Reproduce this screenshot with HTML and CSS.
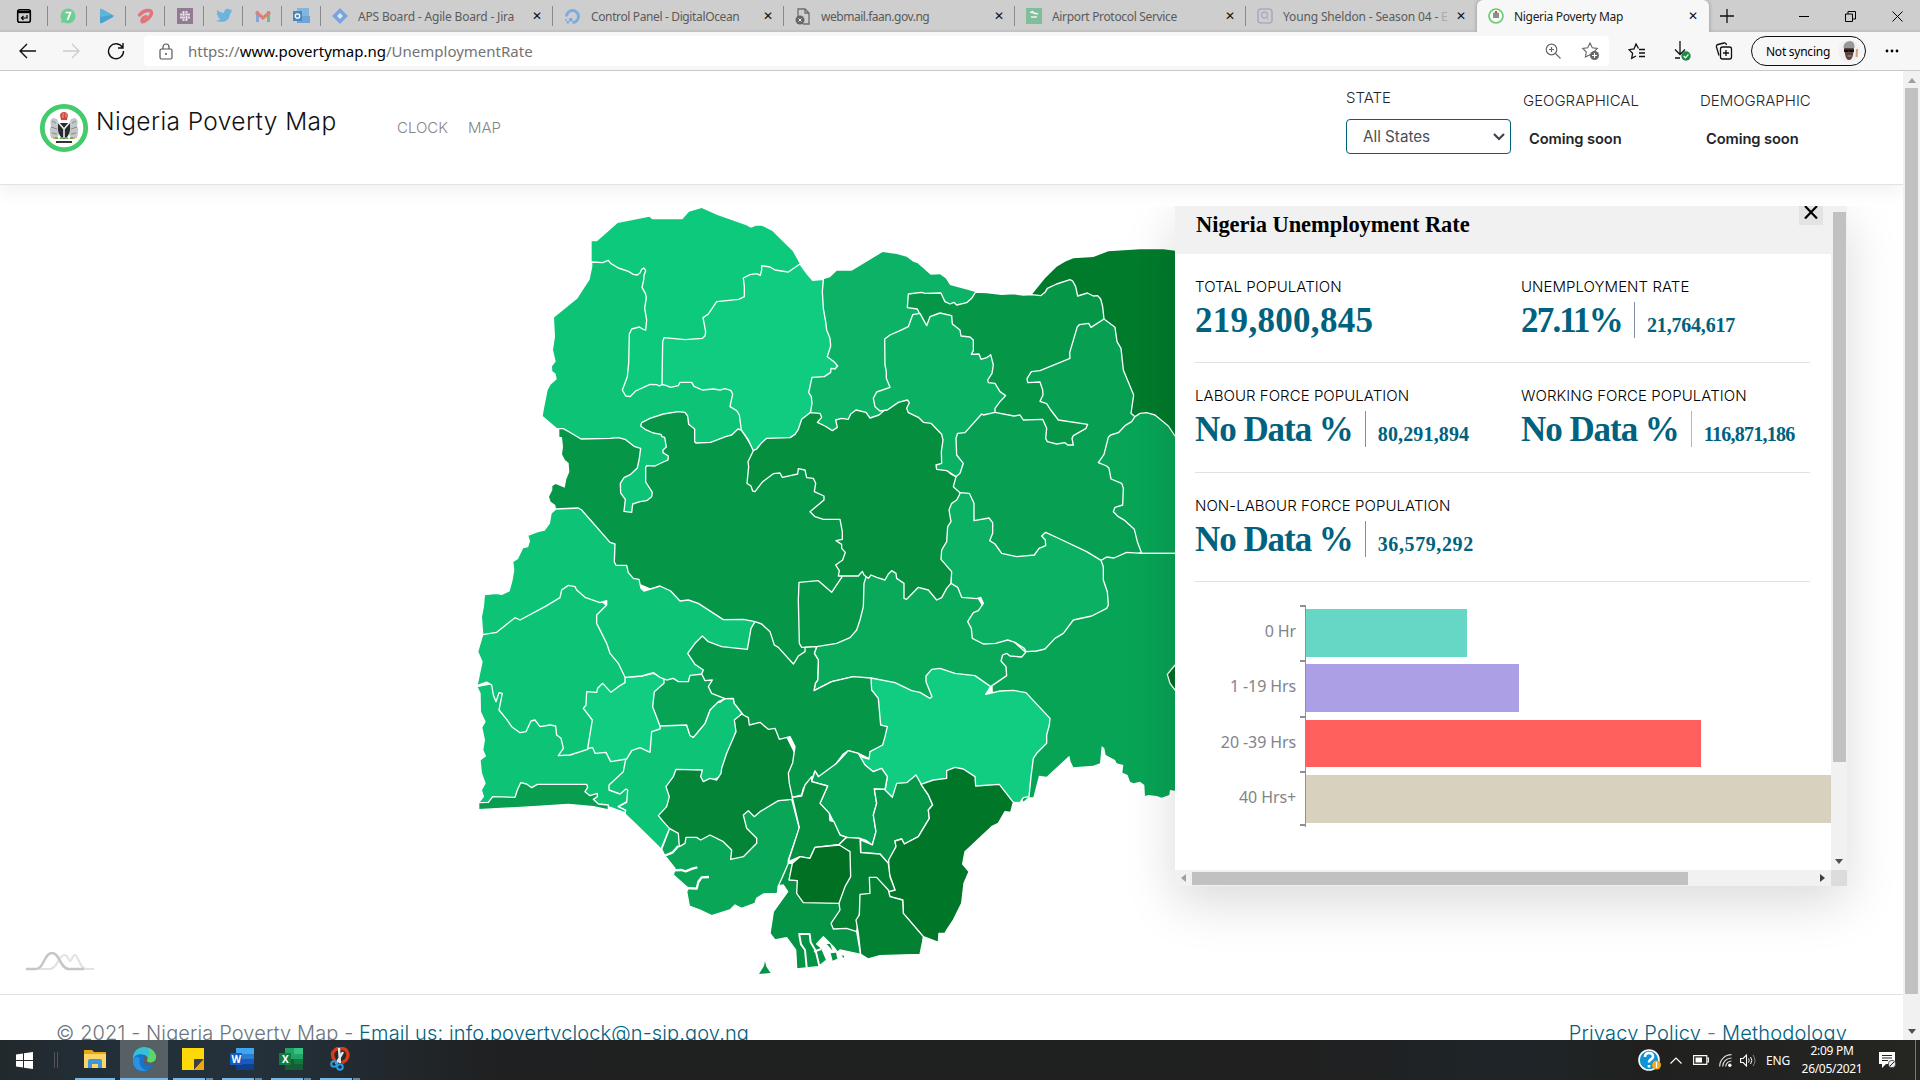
FILE: index.html
```html
<!DOCTYPE html>
<html lang="en">
<head>
<meta charset="utf-8">
<title>Nigeria Poverty Map</title>
<link rel="stylesheet" href="styles.css">
</head>
<body>
<div class="tabs">
  <div class="pin first"><svg width="16" height="16" viewBox="0 0 16 16"><rect x="1.7" y="1.7" width="12.6" height="12.6" rx="2" fill="none" stroke="#000" stroke-width="1.6"/><path d="M1 4h14" stroke="#000" stroke-width="2.4"/><path d="M11 7v3H5.5M7.5 8l-2 2 2 2" fill="none" stroke="#000" stroke-width="1.2"/></svg></div>
  <div class="pin"><svg width="16" height="16" viewBox="0 0 16 16"><circle cx="8" cy="8" r="7.5" fill="#6fce93"/><path d="M1 15l1-5 4 4z" fill="#6fce93"/><path d="M5.5 4.5h5L7.500 12" fill="none" stroke="#fff" stroke-width="1.7"/></svg></div>
  <div class="pin"><svg width="16" height="16" viewBox="0 0 16 16"><path d="M1 2q0-2 2-1l11 6q2 1 0 2L3 15q-2 1-2-1z" fill="#5fb4dc"/><path d="M1 9l12-2 1 2L3 15q-2 1-2-1z" fill="#4aa3cf"/></svg></div>
  <div class="pin"><svg width="17" height="17" viewBox="0 0 17 17"><path d="M2.500 7Q6 3 10 2.500q5-.5 4.500 3-1 4-7.500 8" fill="none" stroke="#e2757a" stroke-width="3.400" stroke-linecap="round"/><path d="M5 14q-1-4 4-5.500" fill="none" stroke="#e2757a" stroke-width="3" stroke-linecap="round"/></svg></div>
  <div class="pin"><svg width="16" height="16" viewBox="0 0 16 16"><path fill="#937a94" d="M0 0h16v16H0z"/><path d="M6.500 3v5M9.500 8v5M3 9.500h5M8 6.500h5M9.500 3v2M6.500 11v2M3 6.500h2M11 9.500h2" stroke="#e6e0e6" stroke-width="2"/></svg></div>
  <div class="pin"><svg width="16" height="16" viewBox="0 0 16 16"><path d="M1 2q3 3 7 3c0-5 5-5 6-3l2-.5-1 2 1 .2-2 2C14 13 6 16 0 12.500q3 0 4.500-1.500-2-.5-3-2.500H3Q.5 7.500.6 5l1.400.4Q0 4 1 2z" fill="#6db4dc"/></svg></div>
  <div class="pin"><svg width="16" height="14" viewBox="0 0 16 14"><path d="M1 13V2h3v11z" fill="#85a7dc"/><path d="M12 13V2h3v11z" fill="#76bb86"/><path d="M1 3l7 6 7-6" fill="none" stroke="#e07d74" stroke-width="3"/></svg></div>
  <div class="pin"><svg width="17" height="16" viewBox="0 0 17 16"><path fill="#83b6df" d="M4 0h12v8H4z"/><path fill="#6fa5d4" d="M4 8h13v7H4z"/><path fill="#4d86b8" d="M0 3h9v10H0z"/><circle cx="4.500" cy="8" r="2.200" fill="none" stroke="#fff" stroke-width="1.300"/></svg></div>
  <div class="tab"><svg width="16" height="16" viewBox="0 0 16 16"><path d="M8 0l8 8-8 8-8-8z" fill="#7ba3e0"/><path d="M8 5l3 3-3 3-3-3z" fill="#dfe6f2"/></svg><span class="t1">APS Board - Agile Board - Jira</span><b>✕</b></div>
  <div class="tab"><svg width="17" height="17" viewBox="0 0 17 17"><path d="M8.500 14.500a6 6 0 1 0-6-6" fill="none" stroke="#78aee4" stroke-width="3"/><path fill="#78aee4" d="M5 10h3.500v3.500H5zM2.500 13H5v2.500H2.500zM1 11h1.700v1.700H1z"/></svg><span class="t2">Control Panel - DigitalOcean</span><b>✕</b></div>
  <div class="tab"><svg width="16" height="17" viewBox="0 0 16 17"><path d="M3 9V1h7l4 4v11H8M10 1v4h4" fill="none" stroke="#6d6d6d" stroke-width="1.300"/><circle cx="5" cy="12" r="4.500" fill="#666"/><path d="M3.500 10.500l3 3m0-3l-3 3" stroke="#eee"/></svg><span class="t3">webmail.faan.gov.ng</span><b>✕</b></div>
  <div class="tab"><svg width="16" height="16" viewBox="0 0 16 16"><path fill="#80bd9b" d="M0 0h16v16H0z"/><path d="M4 4l8 2M6 3l3 3M5 9h6" stroke="#eef6f1" stroke-width="1.400"/></svg><span class="t4">Airport Protocol Service</span><b>✕</b></div>
  <div class="tab last"><svg width="16" height="16" viewBox="0 0 16 16"><rect x="1" y="1" width="14" height="14" rx="3" fill="none" stroke="#aaaac4" stroke-width="1.600"/><circle cx="7.500" cy="7" r="3" fill="none" stroke="#aaaac4" stroke-width="1.400"/><path d="M10 11h2" stroke="#aaaac4"/></svg><span class="t5">Young Sheldon - Season 04 - <i>E</i></span><b>✕</b></div>
  <div class="tab active"><svg width="16" height="16" viewBox="0 0 16 16"><circle cx="8" cy="8" r="7" fill="#f6fbf4" stroke="#6ccb78" stroke-width="1.700"/><path d="M5 5l3-1 3 1v5H5z" fill="#8a9189"/><path d="M7 3h2v2H7z" fill="#c7544c"/></svg><span>Nigeria Poverty Map</span><b>✕</b></div>
  <svg class="plus" width="14" height="14" viewBox="0 0 14 14"><path d="M7 0v14M0 7h14" stroke="#111" stroke-width="1.300"/></svg>
  <div class="wins">
    <svg width="10" height="10" viewBox="0 0 10 10"><path d="M0 5.500h10" stroke="#000"/></svg>
    <svg width="11" height="11" viewBox="0 0 11 11"><path d="M.5 3h7v7.500h-7zM3 3V.5h7.500v7.500h-3" fill="none" stroke="#000"/></svg>
    <svg width="11" height="11" viewBox="0 0 11 11"><path d="M.5.5l10 10m0-10l-10 10" stroke="#000"/></svg>
  </div>
</div>
<div class="bar">
  <div class="nav">
    <svg width="18" height="16" viewBox="0 0 18 16"><path d="M17 8H1M8 1L1 8l7 7" fill="none" stroke="#111" stroke-width="1.400"/></svg>
    <svg width="18" height="16" viewBox="0 0 18 16"><path d="M0 8h16M9 1l7 7-7 7" fill="none" stroke="#ccc" stroke-width="1.400"/></svg>
    <svg width="18" height="18" viewBox="0 0 18 18"><path d="M15.500 5.500A7.500 7.500 0 1 0 16.500 9M16 1v5h-5" fill="none" stroke="#111" stroke-width="1.400"/></svg>
  </div>
  <div class="address">
    <svg width="14" height="17" viewBox="0 0 14 17"><rect x="1" y="6" width="12" height="10" rx="1.500" fill="none" stroke="#555" stroke-width="1.200"/><path d="M4 6V4a3 3 0 0 1 6 0v2" fill="none" stroke="#555" stroke-width="1.200"/><circle cx="7" cy="11" r="1" fill="#555"/></svg>
    <span class="url">https://<em>www.povertymap.ng</em>/UnemploymentRate</span>
    <svg class="mag" width="16" height="16" viewBox="0 0 16 16"><circle cx="6.500" cy="6.500" r="5.300" fill="none" stroke="#666" stroke-width="1.200"/><path d="M10.500 10.500l5 5M4 6.500h5M6.500 4v5" stroke="#666" stroke-width="1.200"/></svg>
    <svg width="18" height="18" viewBox="0 0 18 18"><path d="M9 1l2.300 4.800 5 .7-3.600 3.600.9 5L9 12.700 4.400 15l.9-5-3.600-3.600 5-.7z" fill="none" stroke="#666" stroke-width="1.100"/><circle cx="13.500" cy="13.500" r="4.500" fill="#666"/><path d="M11 13.500h5M13.500 11v5" stroke="#fff"/></svg>
  </div>
  <div class="tools">
    <svg width="18" height="17" viewBox="0 0 18 17"><path d="M10.500 5.500L8 1 6 6l-5 .7 3.600 3.600-.9 5L8 13M11 6.500h6M11 10h6M11 13.500h6" fill="none" stroke="#111" stroke-width="1.300"/></svg>
    <svg width="18" height="20" viewBox="0 0 18 20"><path d="M7 0v13M2 8.500l5 5 5-5M2 17h5" fill="none" stroke="#111" stroke-width="1.300"/><circle cx="13" cy="15" r="4.700" fill="#1c8a43"/><path d="M10.700 15l1.700 1.800 3-3.300" fill="none" stroke="#fff" stroke-width="1.200"/></svg>
    <svg width="18" height="18" viewBox="0 0 18 18"><path d="M4 13.500L1.500 5Q1 3 3 2.500L9 1q2-.5 2.500 2" fill="none" stroke="#111" stroke-width="1.300"/><rect x="5.500" y="5" width="11" height="12" rx="2" fill="none" stroke="#111" stroke-width="1.300"/><path d="M8 11h6M11 8v6" stroke="#111" stroke-width="1.300"/></svg>
    <div class="profile"><span>Not syncing</span><svg width="22" height="22" viewBox="0 0 22 22"><circle cx="11" cy="11" r="11" fill="#f3f0ef"/><path d="M6 9Q6 4 11 4q4 0 5 5l-1 6q-1 5-4 5t-4-6z" fill="#5b4644"/><path d="M5.500 8Q5 2 12 1q5 0 4.500 7z" fill="#99979c"/><path d="M6 9.500h10v2.500h-4l-1-1-1 1H6z" fill="#111"/><path d="M9.500 16h4" stroke="#b87a6e" stroke-width="1.300"/><path d="M19 9l-.5 8" stroke="#c7a184" stroke-width="2"/></svg></div>
    <svg width="14" height="4" viewBox="0 0 14 4"><circle cx="2" cy="2" r="1.400"/><circle cx="7" cy="2" r="1.400"/><circle cx="12" cy="2" r="1.400"/></svg>
  </div>
</div>
<div class="view">
  <div class="page">
    <header class="head">
      <svg class="emblem" width="50" height="50" viewBox="0 0 50 50"><circle cx="25" cy="25" r="21.700" fill="#fff" stroke="#43cb6c" stroke-width="4.800"/><path d="M11 30q-1-4 1-7-2-6 2-8l4 1 2 5 1 8-3 6h-6zM39 30q1-4-1-7 2-6-2-8l-4 1-2 5-1 8 3 6h6z" fill="#c3c7c7"/><path d="M13 18l4 2M37 18l-4 2M12 24l6 2M38 24l-6 2M13 30l5 1M37 30l-5 1" stroke="#838b8b"/><path d="M19 20h12v7q-1 7-6 9-5-2-6-9z" fill="#252c2c"/><path d="M19 19l6 7 6-7M25 26v9" fill="none" stroke="#eee" stroke-width="1.600"/><path d="M22 10q3-2 6 0l1 2-1 5h-6l-1-5z" fill="#d0483e"/><path d="M24 10v5M27 10v4" stroke="#f2b8b0" stroke-width=".8"/><path d="M14 34q11 4 22 0v2H14z" fill="#d2b63c"/><path d="M16 35h18" stroke="#47a95d" stroke-width="1.600" stroke-dasharray="3 2"/><path d="M17 39h16" stroke="#333" stroke-width="2"/></svg>
      <span class="brand">Nigeria Poverty Map</span>
      <nav><a>CLOCK</a><a>MAP</a></nav>
      <div class="filters">
        <div class="f-state"><label>STATE</label><div class="select"><span>All States</span><svg width="12" height="8" viewBox="0 0 12 8"><path d="M1 1l5 5 5-5" fill="none" stroke="#3c434a" stroke-width="2.200"/></svg></div></div>
        <div class="f-geo"><label>GEOGRAPHICAL</label><p>Coming soon</p></div>
        <div class="f-demo"><label>DEMOGRAPHIC</label><p>Coming soon</p></div>
      </div>
    </header>
    <main class="stage">
      <svg class="map" width="733" height="800" viewBox="0 0 2199 2400">
        <g stroke="#fff" stroke-width="4" stroke-linejoin="round">
          <!-- north -->
          <path fill="#007b2c" stroke="none" d="M1715,314 L1755,265 1790,230 1815,215 1840,205 1900,201 1945,184 2040,178 2110,178 2145,182 2200,190 V900 H2000 L1900,400Z"/>
          <path fill="#07a052" d="M1932,387 L1965,412 1971,455 1983,475 1990,540 2021,615 2013,670 2025,680 2080,900 2045,1088 1925,1112 1600,1100 1450,950 1480,700 1700,500 1855,375Z"/>
          <path fill="#08a557" d="M2025,680 L2040,670 2060,668 2085,675 2125,708 2145,738 2200,760 V1090 H2045 L2032,1055 2023,1018 1995,992 1975,980 1960,965 1965,952 1988,945 1990,895 1985,880 1953,867 1947,835 1940,828 1915,818 1932,793 1945,742 1952,735 1975,728 1995,707 2015,695Z"/>
          <path fill="#0cb265" stroke="none" d="M1090,268 L1110,262 1130,242 1175,242 1268,186 1310,192 1340,200 1360,215 1373,220 1412,254 1440,253 1457,265 1470,285 1547,306 1500,500 1400,700 1050,740 1040,560 1080,500Z"/>
          <path fill="#059648" d="M1345,312 L1385,307 1395,310 1443,309 1450,325 1455,335 1470,342 1482,337 1490,345 1520,338 1535,325 1547,306 1580,308 1625,313 1660,311 1690,315 1715,314 1742,317 1755,307 1762,295 1790,282 1830,269 1838,273 1847,290 1853,318 1882,309 1900,318 1913,317 1922,327 1928,350 1932,387 1893,412 1886,400 1858,404 1852,410 1829,488 1830,505 1740,542 1714,545 1701,566 1703,578 1740,576 1748,600 1749,615 1740,634 1760,641 1770,657 1795,690 1883,703 1878,715 1840,737 1836,745 1840,765 1823,765 1815,758 1790,762 1762,755 1757,745 1760,715 1748,688 1690,690 1680,675 1662,678 1605,667 1560,600 1400,420 1378,370 1372,357 1342,353Z"/>
          <path fill="#0dc97b" stroke="none" d="M395,154 H411 L473,99 568,80 577,88 H667 L687,65 725,54 772,75 857,105 873,113 888,107 905,107 937,123 998,183 1020,222 850,500 610,600 500,640 395,300Z"/>
          <!-- centre -->
          <path fill="#059648" stroke="none" d="M298,716 V740 L306,742 309,770 306,793 315,810 326,819 328,845 319,868 314,893 300,887 287,882 277,888 277,900 267,920 272,935 286,945 288,957 360,1000 465,1150 700,1250 885,1400 1000,1425 1040,1400 1140,1200 1165,1160 V1000 L1110,780 880,782 844,720 700,600 300,716Z"/>
          <path fill="#10cc80" d="M1020,222 L985,246 945,240 930,231 905,227 905,240 901,256 890,251 870,254 850,264 853,290 853,320 836,328 770,335 745,372 729,383 737,425 735,438 727,445 675,449 612,443 608,455 606,584 700,620 844,720 865,750 880,782 1000,760 1052,665 1056,640 1054,620 1046,608 1056,562 1093,560 1112,547 1113,535 1125,537 1133,528 1122,515 1102,500 1112,468 1110,445 1100,420 1097,395 1090,355 1087,305 1090,268 1058,271 1043,254Z"/>
          <path fill="#0dc476" d="M395,216 L428,218 445,211 452,220 475,234 505,244 520,253 532,255 540,249 545,238 552,234 557,242 552,256 551,270 546,292 556,310 559,322 554,355 560,390 557,420 550,418 538,411 515,417 508,432 506,520 502,560 487,600 497,618 510,620 527,603 570,583 590,584 598,588 605,584 618,586 632,592 655,587 660,577 695,577 702,589 727,600 760,597 780,600 795,596 812,601 818,612 810,650 830,662 838,675 844,720 834,717 815,735 797,740 752,757 708,759 704,755 704,717 686,703 683,678 675,667 655,665 610,672 570,685 545,698 542,708 555,718 580,729 603,733 606,740 614,742 619,771 609,780 609,788 625,798 624,810 610,816 585,828 560,827 557,832 557,876 577,907 575,920 560,932 540,935 518,942 515,967 492,964 496,928 482,909 481,880 492,863 512,853 532,834 538,805 542,775 522,769 495,748 475,743 450,745 363,747 328,726 310,716 290,716 246,679 250,655 261,600 270,583 288,567 285,552 275,545 274,528 285,514 277,480 283,440 280,382 350,325 387,268 395,230Z"/>
          <path fill="#08a455" stroke="none" d="M1923,1111 H2200 V1800 L2145,1802 2130,1800 2128,1815 2105,1823 2090,1818 2065,1815 2055,1818 2053,1785 2040,1775 2020,1780 2010,1775 2003,1755 1987,1748 1990,1725 1970,1720 1965,1710 1937,1695 1933,1675 1925,1668 1920,1720 1900,1727 1840,1732 1832,1715 1828,1697 1760,1760 1737,1757 1732,1775 1720,1822 1705,1822 1690,1835 1600,1550 1592,1300Z"/>
          <path fill="#08a455" d="M1900,1180 L1923,1111 1940,1101 1962,1104 2000,1087 2045,1090 H2200 V1150" />
          <path fill="#007023" d="M2122,1453 L2145,1425 2180,1440 V1500 H2145 L2130,1480Z"/>
          <path fill="#0aa95a" d="M1225,1130 L1480,1100 1600,1300 1697,1387 1685,1401 1650,1398 1640,1390 1628,1395 1623,1413 1638,1430 1640,1457 1592,1490 1500,1550 1250,1500 1180,1460 1115,1475 1062,1502 1066,1480 1073,1470 1075,1410 1063,1390 1070,1370 1170,1200Z"/>
          <path fill="#059648" d="M1017,1177 L1075,1172 1115,1207 1145,1162 1150,1140 1225,1140 1212,1180 1210,1250 1200,1290 1190,1320 1170,1343 1130,1360 1070,1370 1025,1372 1018,1360 1015,1230Z"/>
          <path fill="#068e3f" d="M880,782 L890,777 905,758 920,745 990,743 1005,733 1015,718 1025,688 1050,668 1080,670 1085,682 1072,697 1095,708 1117,722 1132,712 1127,690 1145,685 1165,688 1172,672 1188,660 1218,667 1230,684 1257,675 1340,600 1400,680 1465,740 1470,850 1488,860 1480,890 1500,908 1490,1000 1473,1180 1460,1195 1445,1223 1430,1230 1405,1200 1375,1192 1340,1228 1332,1225 1332,1180 1310,1165 1308,1150 1295,1142 1285,1152 1275,1170 1250,1162 1233,1155 1225,1165 1212,1155 1207,1144 1195,1158 1135,1158 1138,1142 1127,1125 1148,1110 1156,1087 1145,1075 1145,1063 1128,1052 1147,1048 1147,1025 1140,988 1090,988 1065,980 1050,965 1092,930 1092,918 1063,905 1067,880 1060,865 1040,863 1035,840 1015,836 1013,852 967,862 960,849 940,851 908,875 885,905 878,903 873,888 861,880 866,830 864,815Z"/>
          <path fill="#0bb163" d="M1380,370 L1358,374 1345,410 1320,422 1290,435 1274,447 1275,525 1279,545 1279,565 1290,592 1250,606 1240,625 1245,650 1260,663 1282,660 1315,637 1342,630 1348,638 1340,655 1345,668 1375,682 1390,697 1413,700 1445,733 1449,750 1444,785 1445,820 1428,825 1430,838 1460,842 1488,860 1500,850 1510,820 1490,795 1488,745 1493,730 1515,728 1565,672 1570,675 1605,667 1605,655 1620,635 1637,617 1620,605 1605,580 1585,578 1583,570 1596,550 1600,525 1592,494 1580,503 1563,508 1557,492 1534,493 1540,482 1540,450 1530,441 1503,438 1500,420 1477,402 1475,377 1440,369 1410,380 1400,407Z"/>
          <path fill="#0bb063" d="M1500,908 L1528,910 1542,940 1542,992 1587,984 1598,998 1598,1030 1589,1052 1605,1062 1625,1090 1670,1100 1723,1095 1737,1075 1757,1067 1756,1050 1745,1038 1757,1027 1800,1047 1880,1085 1923,1111 1930,1130 1930,1170 1942,1205 1945,1245 1940,1255 1895,1278 1840,1290 1810,1330 1785,1345 1755,1377 1730,1383 1698,1385 1693,1375 1665,1357 1643,1350 1607,1360 1570,1362 1537,1345 1534,1315 1523,1295 1540,1268 1555,1262 1570,1240 1562,1222 1550,1226 1505,1222 1493,1192 1473,1180 1475,1145 1443,1108 1445,1080 1460,1055 1463,1010 1473,995 1467,960 1475,940 1490,930 1498,915Z"/>
          <!-- south-west -->
          <path fill="#0dc476" d="M50,1490 L60,1510 61,1565 75,1595 65,1612 73,1650 68,1680 76,1698 60,1710 64,1750 75,1780 64,1800 70,1820 56,1838 325,1836 445,1850 500,1870 495,1860 475,1850 500,1835 550,1750 497,1650 400,1600 100,1480Z"/>
          <path fill="#0dc476" d="M68,1334 L53,1385 66,1415 51,1487 80,1476 95,1485 100,1515 108,1535 117,1508 127,1510 117,1560 140,1588 155,1610 180,1628 198,1625 213,1593 225,1590 240,1610 270,1605 287,1608 290,1635 303,1645 310,1675 295,1697 330,1695 383,1678 500,1470 500,1300 330,1150Z"/>
          <path fill="#089d4f" d="M56,1838 L85,1837 98,1820 165,1822 172,1800 182,1778 200,1782 215,1793 232,1783 H380 L383,1792 375,1805 390,1817 412,1810 412,1820 400,1828 415,1842 445,1845 445,1860 400,1850 325,1843 220,1850 56,1859Z"/>
          <path fill="#0dc476" d="M497,1708 L515,1682 570,1625 600,1605 680,1605 690,1635 700,1642 735,1600 750,1560 768,1535 780,1537 795,1526 820,1525 823,1540 845,1568 828,1620 800,1750 700,1800 628,1918 603,1977 545,1920 495,1872 497,1860 475,1850 500,1837 503,1800 498,1797 480,1812 447,1800 447,1785 490,1745Z"/>
          <path fill="#10cd81" d="M495,1462 V1478 L475,1490 453,1507 428,1480 413,1495 410,1507 380,1505 378,1545 370,1555 397,1590 383,1675 398,1673 405,1690 438,1687 452,1715 500,1707 515,1682 540,1673 570,1687 575,1625 600,1617 605,1560 620,1480 612,1463 580,1450 545,1458Z"/>
          <path fill="#08a455" d="M612,1466 V1480 L583,1505 578,1550 600,1608 680,1605 690,1637 700,1642 735,1600 750,1560 775,1535 795,1526 830,1450 725,1440Z"/>
          <path fill="#0dc476" d="M287,957 L355,954 365,960 450,1057 465,1062 463,1115 468,1126 500,1126 505,1148 520,1165 537,1168 543,1195 552,1203 600,1188 632,1203 660,1233 685,1230 715,1240 790,1289 850,1288 885,1295 880,1400 730,1452 690,1456 685,1475 655,1475 640,1465 620,1470 600,1462 580,1448 545,1458 495,1462 475,1420 450,1390 440,1360 410,1300 410,1275 440,1245 440,1232 420,1238 375,1222 350,1200 345,1190 325,1186 305,1200 300,1223 255,1250 180,1290 165,1283 110,1327 68,1334 64,1280 70,1250 73,1214 110,1210 125,1213 147,1203 156,1170 161,1140 158,1115 173,1105 188,1073 203,1070 208,1053 203,1036 235,1024 253,1020 268,1000 273,970Z"/>
          <path fill="#0aa658" d="M628,1918 L605,1978 615,1998 645,2035 640,2055 685,2095 680,2105 688,2148 720,2160 755,2177 810,2160 825,2145 845,2155 885,2140 890,2125 910,2112 952,2110 955,2088 970,2075 970,2055 985,2030 985,2010 1018,1915 995,1827 800,1850Z"/>
          <path fill="#038436" d="M845,1572 L823,1590 828,1625 800,1690 785,1735 783,1750 770,1770 750,1765 730,1775 722,1760 727,1740 648,1738 640,1760 618,1790 628,1820 620,1850 595,1877 610,1895 628,1915 655,1930 658,1970 675,1960 678,1942 710,1942 722,1950 750,1935 790,1955 815,1980 812,2008 850,2000 890,1960 890,1945 860,1915 850,1875 865,1862 883,1880 900,1865 955,1832 997,1828 1010,1700 950,1580Z"/>
          <path fill="#059648" d="M885,1295 L905,1302 930,1325 943,1365 955,1372 1000,1422 1005,1415 1015,1398 1035,1385 1035,1372 1070,1370 1063,1390 1075,1410 1073,1470 1066,1480 1062,1502 1115,1475 1180,1460 1233,1464 1300,1500 1285,1650 1227,1706 1195,1690 1165,1682 1150,1692 1125,1725 1085,1760 1075,1758 1065,1743 1055,1770 1030,1795 1025,1815 997,1822 988,1780 985,1750 998,1718 1005,1670 990,1640 958,1648 945,1615 925,1618 900,1597 868,1605 865,1583 850,1575 823,1540 820,1525 795,1526 755,1510 745,1490 757,1470 735,1472 725,1452 730,1440 705,1423 683,1390 705,1360 727,1338 745,1355 785,1370 862,1378 873,1315Z"/>
          <!-- south-east -->
          <path fill="#10cd81" d="M1233,1464 L1305,1478 1355,1502 1380,1507 1410,1525 1416,1520 1398,1475 1398,1458 1415,1438 1440,1435 1485,1450 1545,1457 1592,1490 1577,1513 1620,1503 1660,1501 1698,1508 1770,1585 1768,1605 1760,1635 1760,1660 1730,1690 1720,1705 1713,1760 1707,1820 1690,1823 1680,1838 1660,1837 1540,1850 1380,1860 1297,1822 1275,1805 1282,1760 1265,1735 1240,1745 1215,1725 1195,1692 1210,1703 1227,1707 1230,1685 1268,1665 1275,1640 1282,1610 1262,1605 1255,1525 1235,1500Z"/>
          <path fill="#08a455" d="M1055,1775 L1065,1743 1075,1760 1130,1720 1165,1682 1195,1690 1215,1725 1240,1745 1265,1735 1282,1760 1275,1798 1243,1797 1250,1840 1240,1875 1248,1925 1237,1965 1220,1952 1200,1945 1160,1942 1140,1935 1108,1870 1080,1840 1103,1788Z"/>
          <path fill="#059648" d="M1243,1797 L1273,1798 1297,1822 1310,1780 1340,1778 1368,1755 1385,1785 1405,1815 1418,1845 1405,1860 1408,1885 1375,1940 1333,1962 1325,1947 1305,1953 1308,1970 1285,2020 1260,1992 1202,1988 1202,1950 1237,1965 1248,1925 1240,1875 1250,1840Z"/>
          <path fill="#007628" d="M1383,1783 L1420,1770 1460,1765 1460,1742 1485,1732 1510,1737 1545,1760 1547,1788 1618,1783 1660,1837 1652,1867 1635,1865 1615,1900 1595,1910 1515,1985 1508,2022 1527,2045 1512,2080 1505,2140 1480,2190 1460,2220 1455,2230 1437,2230 1435,2257 1390,2240 1330,2170 1328,2130 1290,2120 1285,2105 1305,2100 1287,2050 1286,2010 1308,1970 1305,1953 1325,1947 1333,1962 1375,1940 1408,1885 1405,1860 1418,1845 1405,1815Z"/>
          <path fill="#068e3f" d="M997,1822 L1025,1818 1035,1785 1055,1760 1055,1775 1103,1788 1080,1840 1108,1870 1110,1892 1122,1895 1140,1935 1160,1942 1138,1963 1065,1972 1050,2005 1020,2000 985,2015 1018,1912Z"/>
          <path fill="#059345" d="M985,2020 L997,2020 1020,2000 1200,2130 1190,2225 1202,2293 1140,2280 1133,2287 1120,2270 1090,2240 1070,2262 1085,2275 1100,2310 1075,2330 1010,2337 1007,2280 980,2243 945,2250 930,2230 940,2165 983,2105 970,2085 955,2088 970,2055Z"/>
          <path fill="#038133" d="M1138,1963 L1160,1942 1200,1945 1202,1988 1260,1992 1285,2020 1290,2060 1305,2100 1285,2105 1200,2160 1190,2225 1160,2215 1120,2217 1113,2200 1140,2160 1137,2140Z"/>
          <path fill="#007022" d="M987,2070 L997,2020 1020,2000 1050,2005 1065,1972 1138,1965 1170,1985 1172,2060 1155,2090 1137,2140 1030,2138 1010,2110 1012,2072Z"/>
          <path fill="#038133" d="M1228,2062 L1250,2062 1285,2100 1290,2120 1328,2130 1330,2170 1390,2240 1388,2255 1380,2293 1260,2297 1225,2307 1202,2293 1195,2230 1188,2190 1198,2175 1200,2113 1230,2110Z"/>
          <path fill="none" stroke-width="6" d="M1015,2232h34l3,25 15,25 12,50M1018,2235l5,28 12,17 5,52M1092,2260l18,35M1103,2258l20,45M1062,2285l22-8"/>
          <path fill="none" stroke-width="7" d="M640,2041l25,-1 12,4 20,-8 15,-4M680,2094l30,2 5,-20 10,-14 22,-1M612,1998l25,-10 18,-20"/>
          <path fill="#059345" stroke="none" d="M897,2352l15,-24 3,-14 4,16 13,19ZM1100,2262l10,0 8,20ZM1112,2290l16,-2 4,18 -14,6ZM1138,2302l12,4M1145,2296l8,2 -3,6Z"/>
        </g>
      </svg>
      <svg class="logo" width="68" height="20" viewBox="0 0 68 20"><path d="M12 17h12c7 0 9-14 14-14s4 6 6 6 2-6 5-6 5 14 11 14h8" fill="none" stroke="#e2e2e2" stroke-width="2.200"/><path d="M0 17h10C18 17 18 1 26 1s8 16 17 16h15" fill="none" stroke="#c6c6c6" stroke-width="2.400"/></svg>
      <section class="panel">
        <div class="scroll">
          <div class="p-head"><h1>Nigeria Unemployment Rate</h1><span class="x"><svg width="14" height="13" viewBox="0 0 14 13"><path d="M1 0l12 12.500M13 0L1 12.500" stroke="#000" stroke-width="2.200"/></svg></span></div>
          <div class="stats">
            <div class="row"><div class="cell"><label>TOTAL POPULATION</label><div class="num"><strong class="total">219,800,845</strong></div></div><div class="cell"><label>UNEMPLOYMENT RATE</label><div class="num"><strong class="rate">27.11%</strong><small class="n1">21,764,617</small></div></div></div>
            <div class="row"><div class="cell"><label>LABOUR FORCE POPULATION</label><div class="num"><strong class="none">No Data %</strong><small class="n2">80,291,894</small></div></div><div class="cell"><label>WORKING FORCE POPULATION</label><div class="num"><strong class="none">No Data %</strong><small class="n3 warm">116,871,186</small></div></div></div>
            <div class="row"><div class="cell"><label>NON-LABOUR FORCE POPULATION</label><div class="num"><strong class="none">No Data %</strong><small class="n4">36,579,292</small></div></div></div>
          </div>
          <div class="chart">
            <div class="names"><span>0 Hr</span><span>1 -19 Hrs</span><span>20 -39 Hrs</span><span>40 Hrs+</span></div>
            <div class="ticks"><i></i><i></i><i></i><i></i></div>
            <div class="bars"><i class="c1" style="width:161px"></i><i class="c2" style="width:213px"></i><i class="c3" style="width:395px"></i><i class="c4" style="width:525px"></i></div>
          </div>
        </div>
        <div class="vbar"><div class="vthumb"></div><svg width="8" height="5" viewBox="0 0 8 5"><path d="M0 0h8L4 5z" fill="#505050"/></svg></div>
        <div class="hbar"><svg width="5" height="8" viewBox="0 0 5 8"><path d="M5 0v8L0 4z" fill="#a0a0a0"/></svg><div class="hthumb"></div><svg class="ra" width="5" height="8" viewBox="0 0 5 8"><path d="M0 0v8l5-4z" fill="#404040"/></svg></div>
        <div class="corner"></div>
      </section>
    </main>
    <footer class="foot"><span class="copy">© 2021 - Nigeria Poverty Map - <a>Email us: info.povertyclock@n-sip.gov.ng</a></span><span class="links"><a>Privacy Policy</a> - <a>Methodology</a></span></footer>
  </div>
  <div class="sbar"><svg width="8" height="5" viewBox="0 0 8 5"><path d="M0 5h8L4 0z" fill="#a0a0a0"/></svg><div class="sthumb"></div><svg width="8" height="5" viewBox="0 0 8 5"><path d="M0 0h8L4 5z" fill="#505050"/></svg></div>
</div>
<div class="task">
  <div class="start"><svg width="17" height="17" viewBox="0 0 17 17"><path d="M0 2.500L7 1.500V8H0zM8 1.300L17 0v8H8zM0 9h7v6.500l-7-1zM8 9h9v8l-9-1.300z" fill="#fff"/></svg></div>
  <div class="grip"></div>
  <div class="app"><svg width="22" height="20" viewBox="0 0 22 20"><path d="M0 1h8l2 2h12v16H0z" fill="#e8a811"/><path d="M0 5h22v14H0z" fill="#fcd568"/><path d="M4 19v-7q0-2 2-2h10q2 0 2 2v7h-4v-4H8v4z" fill="#3f97d8"/></svg></div>
  <div class="app on"><svg width="24" height="24" viewBox="0 0 24 24"><path d="M1 13C0 5 6 0 12 0s12 4 12 10c0 5-6 7-9 4 3-7-7-9-14-1z" fill="#35c1d8"/><path d="M16 1c6 2 8 6 8 9 0 5-6 7-9 4 2-4 4-8 1-13z" fill="#5fd75e"/><path d="M1 13c1-7 13-8 11-1-2 6 5 9 10 5-2 5-7 7-11 7C4 24 0 19 1 13z" fill="#1773cf"/><path d="M8 12c-2 6 3 12 8 11-9 3-15-2-15-9 0-4 5-6 7-2z" fill="#2a93df"/></svg></div>
  <div class="app multi"><svg width="22" height="22" viewBox="0 0 22 22"><path d="M0 0h22v22H0z" fill="#ffd80a"/><path d="M12 22V11h10z" fill="#3e3e3e"/><path d="M12 22l10-11v11z" fill="#f2a50c"/></svg></div>
  <div class="app multi"><svg width="24" height="22" viewBox="0 0 24 22"><path fill="#41a5ee" d="M6 0h18v6H6z"/><path fill="#2b7cd3" d="M6 6h18v5H6z"/><path fill="#185abd" d="M6 11h18v5H6z"/><path fill="#103f91" d="M6 16h18v6H6z"/><path fill="#185abd" d="M0 5h12v12H0z"/><text x="1.500" y="15" class="glyph">W</text></svg></div>
  <div class="app multi"><svg width="24" height="22" viewBox="0 0 24 22"><path fill="#21a366" d="M6 0h9v11H6z"/><path fill="#33c481" d="M15 0h9v6h-9z"/><path fill="#21a366" d="M15 6h9v5h-9z"/><path fill="#107c41" d="M15 11h9v5h-9z"/><path fill="#185c37" d="M6 11h9v5h9v6H6z"/><path fill="#107c41" d="M0 5h12v12H0z"/><text x="3" y="15" class="glyph">X</text></svg></div>
  <div class="app multi"><svg width="22" height="24" viewBox="0 0 22 24"><path d="M6 14Q1 7 6 3t11 0q4 5 0 10l-4 3" fill="none" stroke="#d83b18" stroke-width="3.400"/><path d="M10 1l1 15M14 5l-7 12" stroke="#e6e6e6" stroke-width="2.400"/><circle cx="5" cy="17" r="2.800" fill="none" stroke="#2a9de4" stroke-width="2"/><circle cx="11" cy="20" r="2.800" fill="none" stroke="#2a9de4" stroke-width="2"/></svg></div>
  <div class="tray">
    <svg class="help" width="23" height="22" viewBox="0 0 23 22"><circle cx="11" cy="11" r="10" fill="#0b94d8" stroke="#fff" stroke-width="1.600"/><path d="M7 8q0-4 4-4t4 3.500q0 2-3 3.500-1 .6-1 2.500M11 16v2.500" fill="none" stroke="#fff" stroke-width="2.600"/><circle cx="18.500" cy="16" r="4.500" fill="#f0a91b"/><path d="M18.500 13v6" stroke="#fff" stroke-width="1.300"/></svg>
    <svg class="chev" width="12" height="7" viewBox="0 0 12 7"><path d="M.5 6.500l5.500-5.500 5.500 5.500" fill="none" stroke="#fff" stroke-width="1.200"/></svg>
    <svg class="bat" width="16" height="10" viewBox="0 0 16 10"><path d="M.6.600h13.200v8.800H.6zM14 3h1.400v4H14" fill="none" stroke="#fff" stroke-width="1.100"/><path d="M2.500 2.500h6.500v5H2.500z" fill="#fff"/></svg>
    <svg class="wifi" width="13" height="13" viewBox="0 0 13 13"><path d="M.7 12.500A11.700 11.700 0 0 1 12.500.7M3.700 12.500A8.700 8.700 0 0 1 12.500 4M6.700 12.500A5.800 5.800 0 0 1 12.500 7" fill="none" stroke="#ddd" stroke-width="1.200"/><circle cx="10.800" cy="11.200" r="1.700" fill="#fff"/></svg>
    <svg class="spk" width="16" height="13" viewBox="0 0 16 13"><path d="M.6 4.500h2.500L6.500 1v11L3.100 8.500H.6z" fill="none" stroke="#fff" stroke-width="1.100"/><path d="M8.500 4.500q1.500 2 0 4M10.500 3q2.800 3.500 0 7" fill="none" stroke="#fff"/><path d="M13 1q4 5.500 0 11" fill="none" stroke="#888"/></svg>
    <span class="lang">ENG</span>
    <div class="time"><span>2:09 PM</span><span>26/05/2021</span></div>
    <svg class="note" width="17" height="16" viewBox="0 0 17 16"><path d="M0 0h16v12H7l-4 4v-4H0z" fill="#fff"/><path d="M3 3.500h10M3 6h10M3 8.500h6" stroke="#222" stroke-width="1.100"/><circle cx="13" cy="12" r="3.700" fill="#eee" stroke="#222" stroke-width=".7"/><path d="M11 14l4-4" stroke="#222"/></svg>
    <i class="edge"></i>
  </div>
</div>
</body>
</html>
```
FILE: styles.css
```css
* { box-sizing: border-box; }
body { margin: 0; width: 1920px; height: 1080px; overflow: hidden; font-family: Inter, sans-serif; background: #fff; }
svg { display: block; flex: none; }

/* tab strip */
.tabs { display: flex; height: 32px; background: linear-gradient(#cecece 29px, #bfbfbf); font: 12px "Noto Sans", sans-serif; color: #5b5b5b; }
.pin { display: flex; align-items: center; justify-content: center; width: 39px; position: relative; }
.pin.first { width: 48px; }
.pin::after, .tab::after { content: ""; position: absolute; right: 0; top: 6px; height: 20px; width: 1px; background: #8b8b8b; }
.tab { position: relative; display: flex; align-items: center; width: 231px; padding: 0 11px 0 11px; }
.pin + .tab { width: 232px; }
.tab span { margin-left: 10px; white-space: nowrap; letter-spacing: -.31px; }
.tab .t1 { letter-spacing: -.18px; }
.tab .t2 { letter-spacing: -.37px; }
.tab .t3 { letter-spacing: -.47px; }
.tab .t4 { letter-spacing: -.33px; }
.tab .t5 { letter-spacing: -.15px; }
.tab b { margin-left: auto; font: bold 12px "DejaVu Sans", sans-serif; color: #111; }
.tab i { font-style: normal; color: #aaa; }
.tab.last::after, .tab.active::after { display: none; }
.tab.active { width: 232px; background: #f7f7f7; border-radius: 6px 6px 0 0; color: #1b1b1b; box-shadow: 0 0 4px rgba(0,0,0,.3); clip-path: inset(0 -4px); }
.plus { margin: 9px 0 0 11px; }
.wins { display: flex; gap: 36px; margin: 11px 0 0 65px; }

/* toolbar */
.bar { display: flex; align-items: center; height: 39px; background: #f7f7f7; border-bottom: 1px solid #c9c9c9; }
.nav { display: flex; align-items: center; gap: 26px; padding-left: 19px; width: 144px; }
.address { display: flex; align-items: center; width: 1465px; height: 30px; padding: 0 10px 0 15px; background: #fff; border-radius: 4px; }
.url { margin-left: 15px; font: 15px/30px "Noto Sans", sans-serif; color: #737373; }
.url em { font-style: normal; color: #000; }
.mag { margin: 0 20px 0 auto; }
.tools { display: flex; align-items: center; margin-left: 19px; }
.tools > svg:nth-child(1) { margin-right: 27px; }
.tools > svg:nth-child(2) { margin-right: 24px; }
.tools > svg:nth-child(3) { margin-right: 18px; }
.profile { display: flex; align-items: center; justify-content: space-between; width: 115px; height: 30px; margin-right: 19px; padding: 0 5px 0 14px; border: 1px solid #111; border-radius: 15px; font: 12px "Noto Sans", sans-serif; letter-spacing: -.25px; white-space: nowrap; }

/* page */
.view { display: flex; height: 969px; }
.page { width: 1903px; overflow: hidden; background: #fff; }
.head { display: flex; position: relative; z-index: 2; height: 114px; padding-left: 39px; border-bottom: 1px solid #dfe2e6; box-shadow: 0 8px 16px rgba(0,0,0,.05); background: #fff; color: #212529; }
.emblem { margin-top: 32px; }
.brand { width: 301px; margin: 35px 0 0 7px; font-size: 24.500px; line-height: 30px; font-weight: 300; color: #111; white-space: nowrap; letter-spacing: .41px; }
.head nav { display: flex; gap: 20px; width: 949px; padding-top: 47px; font-size: 15px; line-height: 20px; color: #868686; font-weight: 300; }
.filters { display: flex; font-size: 15px; font-weight: 300; }
.filters label { display: block; line-height: 20px; }
.f-state { width: 177px; padding-top: 17px; }
.f-geo { width: 177px; padding-top: 20px; }
.f-demo { padding-top: 20px; }
.filters p { margin: 19px 0 0 6px; font-size: 14.700px; line-height: 19px; font-weight: 600; letter-spacing: -.1px; }
.select { display: flex; align-items: center; justify-content: space-between; width: 165px; height: 35px; margin-top: 11px; padding: 0 5px 0 16px; border: 1px solid #00617f; border-radius: 4px; color: #495057; font-size: 15.200px; font-weight: 400; }

.stage { position: relative; height: 809px; padding: 5px 0 0 460px; overflow: hidden; }
.logo { position: absolute; left: 26px; top: 767px; }
.panel { position: absolute; left: 1175px; top: 21px; display: grid; grid-template: 664px 16px / 656px 16px; width: 672px; height: 680px; background: #fff; box-shadow: 0 16px 48px rgba(0,0,0,.15); clip-path: inset(0 -80px -80px -80px); }
.scroll { overflow: hidden; }
.p-head { display: flex; justify-content: space-between; height: 48px; padding: 0 8px 0 21px; background: #f1f1f1; }
.p-head h1 { margin: 6px 0 0; font: bold 22.500px/26px "Liberation Serif", serif; letter-spacing: -.05px; color: #000; }
.x { display: flex; justify-content: center; width: 24px; height: 19px; background: #e3e3e3; }
.stats { padding: 0 21px 0 20px; height: 328px; }
.row { display: flex; height: 109.300px; padding-top: 23px; border-bottom: 1px solid #dfe1e3; }
.cell { flex: 0 0 326px; }
.cell + .cell { flex-basis: 289px; }
.cell label { display: block; font-size: 15px; line-height: 20px; font-weight: 300; color: #000; white-space: nowrap; letter-spacing: .05px; }
.num { display: flex; align-items: baseline; height: 46px; padding-top: 1px; color: #00627e; font-family: "Liberation Serif", serif; white-space: nowrap; }
.num strong { font-size: 35px; line-height: 46px; }
.total { letter-spacing: .3px; }
.rate { letter-spacing: -1.800px; }
.none { letter-spacing: -1.050px; }
.num small { height: 36px; margin-left: 12px; padding-left: 12px; border-left: 1px solid #7f8ea5; font-size: 20px; line-height: 46px; font-weight: bold; }
.n1 { letter-spacing: -.2px; }
.n2 { letter-spacing: .15px; }
.n3 { letter-spacing: -.75px; }
.n4 { letter-spacing: .6px; }
.num .warm { border-left-color: #e8a878; }
.chart { display: flex; height: 222px; margin-top: 23px; }
.names { width: 123px; display: grid; grid-template-rows: repeat(4, 55.300px); align-items: center; text-align: right; font: 16px/20px "Noto Sans", sans-serif; color: #83838b; letter-spacing: -.1px; }
.names span { margin-top: -3px; }
.ticks { width: 10px; border-right: 1.500px solid #8d8f98; display: grid; grid-template-rows: repeat(4, 55.300px); padding-left: 4px; }
.ticks i { border-top: 2px solid #8d8f98; }
.ticks i:last-child { border-bottom: 2px solid #8d8f98; }
.bars { display: grid; grid-template-rows: repeat(4, 47.500px); row-gap: 7.900px; padding-top: 4px; }
.c1 { background: #67d7c5; } .c2 { background: #ac9fe5; } .c3 { background: #ff605d; } .c4 { background: #d7d1bd; }
.vbar { display: flex; flex-direction: column; align-items: center; padding-top: 6px; background: #f1f1f1; }
.vthumb { width: 13px; height: 550px; margin-bottom: 97px; background: #c1c1c1; }
.hbar { display: flex; align-items: center; padding: 0 6px; background: #f1f1f1; }
.hthumb { width: 496px; height: 13px; margin-left: 6px; background: #c1c1c1; }
.ra { margin-left: auto; }
.corner { background: #dcdcdc; }

.foot { display: flex; justify-content: space-between; padding: 24px 56px 0 56px; border-top: 1px solid #dfe2e6; font-size: 20px; line-height: 28px; font-weight: 300; color: #6c757d; white-space: nowrap; letter-spacing: .12px; }
.foot a { color: #00627e; }
.links { letter-spacing: .2px; }
.sbar { display: flex; flex-direction: column; align-items: center; width: 17px; padding-top: 7px; background: #f1f1f1; }
.sthumb { width: 13px; height: 906px; margin: 5px 0 35px; background: #c1c1c1; }

/* taskbar */
.task { display: flex; height: 40px; background: linear-gradient(90deg, #22292d 0, #22303a 130px, #24313a 260px, #1f2021 500px, #202020 1300px, #1e2529 1520px, #20211f 1640px, #252522 1920px); color: #fff; font: 12px "Noto Sans", sans-serif; }
.start { width: 48px; display: flex; align-items: center; justify-content: center; }
.grip { width: 4px; height: 16px; margin: 12px 17px 0 6px; border: solid #555; border-width: 0 1px; }
.app { display: flex; align-items: center; justify-content: center; width: 40px; margin-right: 5px; border-bottom: 2px solid #76b9ed; }
.app.on { width: 48px; background: #566065; }
.app.multi { margin-right: 9px; border-image: linear-gradient(90deg, #76b9ed 31px, #222 31px, #222 32px, #5c8cb3 32px) 2; }
.glyph { font: bold 10px "Open Sans", sans-serif; fill: #fff; }
.tray { display: flex; align-items: center; margin-left: auto; }
.chev { margin-left: 9px; } .bat { margin-left: 11px; } .wifi { margin-left: 10px; } .spk { margin-left: 8px; }
.lang { width: 24px; margin: 0 11px 0 10px; letter-spacing: -.2px; }
.time { display: flex; flex-direction: column; align-items: center; width: 62px; line-height: 18px; margin-right: 16px; white-space: nowrap; letter-spacing: -.3px; }
.note { margin-right: 19px; }
.edge { width: 1px; height: 40px; margin-right: 4px; background: #777; }
```
